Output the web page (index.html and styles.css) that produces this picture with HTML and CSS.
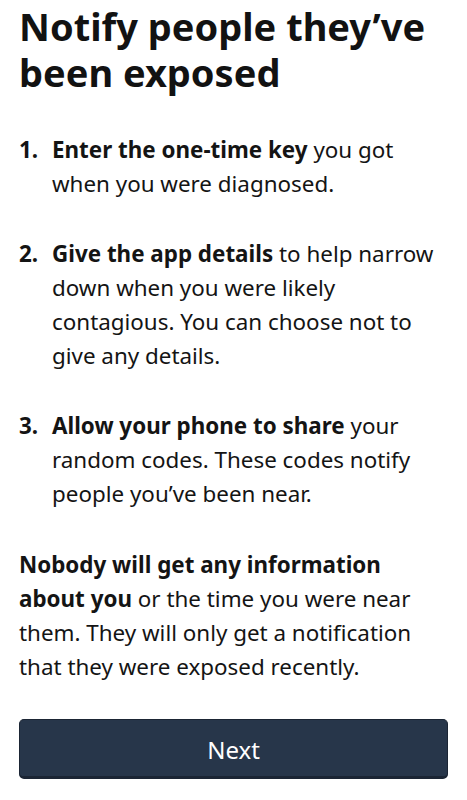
FILE: index.html
```html
<!DOCTYPE html>
<html lang="en">
<head>
<meta charset="utf-8">
<link rel="stylesheet" href="styles.css">
</head>
<body>
<main class="page">
  <h1 class="title">Notify people they’ve been exposed</h1>
  <ol class="steps">
    <li class="step"><span class="num">1.</span><p class="step-text"><b>Enter the one-time key</b> you got when you were diagnosed.</p></li>
    <li class="step"><span class="num">2.</span><p class="step-text"><b>Give the app details</b> to help narrow down when you were likely contagious. You can choose not to give any details.</p></li>
    <li class="step"><span class="num">3.</span><p class="step-text"><b>Allow your phone to share</b> your random codes. These codes notify people you’ve been near.</p></li>
  </ol>
  <p class="note"><b>Nobody will get any information about you</b> or the time you were near them. They will only get a notification that they were exposed recently.</p>
  <button class="next" type="button">Next</button>
</main>
</body>
</html>
```
FILE: styles.css
```css
html, body {
  margin: 0;
  padding: 0;
  background: #ffffff;
}
body {
  font-family: "Noto Sans", "Open Sans", sans-serif;
  color: #141414;
}
.page {
  padding: 3px 19px 0 19px;
  display: flex;
  flex-direction: column;
}
.title {
  margin: 0;
  font-size: 38px;
  line-height: 46px;
  font-weight: 700;
  color: #121212;
}
.steps {
  list-style: none;
  margin: 38px 0 0 0;
  padding: 0;
  display: flex;
  flex-direction: column;
  gap: 36px;
}
.step {
  display: flex;
  font-size: 22.4px;
  line-height: 34px;
}
.num {
  flex: 0 0 33px;
  font-weight: 700;
}
.step-text {
  margin: 0;
  flex: 1;
}
b {
  font-weight: 700;
}
.note {
  margin: 37px 0 0 0;
  padding-right: 12px;
  font-size: 22.4px;
  line-height: 34px;
}
.next {
  margin-top: 35px;
  height: 60px;
  width: 100%;
  background: #27364a;
  border: 1px solid #1b2534;
  border-bottom-width: 3px;
  border-radius: 5px;
  color: #ffffff;
  font-family: "Noto Sans", "Open Sans", sans-serif;
  font-size: 24px;
  padding: 3px 0 0 0;
}
```
